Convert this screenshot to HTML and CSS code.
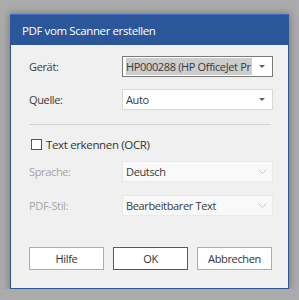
FILE: index.html
```html
<!DOCTYPE html>
<html lang="de">
<head>
<meta charset="utf-8">
<title>PDF vom Scanner erstellen</title>
<link rel="stylesheet" href="styles.css">
</head>
<body>
<div class="dialog">
  <div class="titlebar">PDF vom Scanner erstellen</div>
  <div class="content">
    <div class="row">
      <span class="label">Gerät:</span>
      <div class="select focused"><span class="value"><span class="hl">HP000288 (HP OfficeJet Pr</span></span><span class="tri"></span></div>
    </div>
    <div class="row row-gap">
      <span class="label">Quelle:</span>
      <div class="select"><span class="value">Auto</span><span class="tri"></span></div>
    </div>
    <div class="sep"></div>
    <div class="row check-row">
      <span class="box"></span>
      <span class="check-label">Text erkennen (OCR)</span>
    </div>
    <div class="row row-lang">
      <span class="label disabled">Sprache:</span>
      <div class="select dis"><span class="value">Deutsch</span>
        <svg class="chev" width="9" height="5" viewBox="0 0 9 5"><path d="M0.5 0.5 L4.5 4.5 L8.5 0.5" fill="none" stroke="#c4c4c4" stroke-width="1"/></svg>
      </div>
    </div>
    <div class="row row-style">
      <span class="label disabled">PDF-Stil:</span>
      <div class="select dis"><span class="value">Bearbeitbarer Text</span>
        <svg class="chev" width="9" height="5" viewBox="0 0 9 5"><path d="M0.5 0.5 L4.5 4.5 L8.5 0.5" fill="none" stroke="#c4c4c4" stroke-width="1"/></svg>
      </div>
    </div>
    <div class="buttons">
      <button class="btn">Hilfe</button>
      <button class="btn primary">OK</button>
      <button class="btn">Abbrechen</button>
    </div>
  </div>
</div>
</body>
</html>
```
FILE: styles.css
```css
html, body {
  margin: 0;
  padding: 0;
  background: #ababab;
  font-family: "Open Sans", "Noto Sans", sans-serif;
  font-size: 11px;
  letter-spacing: -0.35px;
  color: #3a3a3a;
}
.dialog {
  width: 279px;
  height: 275px;
  margin: 14px 0 0 10px;
  background: #f0f0f0;
  border: 1px solid #2b579a;
  border-top: none;
  box-sizing: border-box;
  box-shadow: 0 0 7px 1px rgba(0, 0, 0, 0.28);
}
.titlebar {
  height: 31px;
  margin: 0 -1px;
  background: #2b579a;
  border-top: 1px solid #3b6cc0;
  box-sizing: border-box;
  color: #fff;
  font-size: 11.5px;
  letter-spacing: -0.4px;
  padding-left: 12px;
  display: flex;
  align-items: center;
}
.content {
  padding: 11px 15px 0 18px;
}
.row {
  display: flex;
  align-items: center;
  height: 21px;
}
.row-gap { margin-top: 12px; }
.label {
  width: 93px;
  flex: none;
}
.label.disabled { color: #a6a6a6; }
.select {
  flex: 1;
  min-width: 0;
  height: 21px;
  box-sizing: border-box;
  border: 1px solid #d9d9d9;
  background: #fff;
  display: flex;
  align-items: center;
  padding-left: 3px;
}
.select.focused { border-color: #7a7a7a; }
.select.dis {
  background: #f9f9f9;
  border-color: #e9e9e9;
}
.value {
  flex: 1;
  min-width: 0;
  white-space: nowrap;
  overflow: hidden;
}
.hl {
  background: #cdcdcd;
  display: inline-block;
  padding-right: 1px;
  line-height: 17px;
}
.tri {
  flex: none;
  width: 0;
  height: 0;
  border-left: 3px solid transparent;
  border-right: 3px solid transparent;
  border-top: 3px solid #606060;
  margin: 0 7px 0 6px;
}
.chev {
  flex: none;
  margin: 0 5px 0 6px;
}
.sep {
  height: 1px;
  background: #d4d4d4;
  margin: 14px 2px 9px 0;
}
.box {
  width: 11px;
  height: 11px;
  box-sizing: border-box;
  border: 1px solid #555;
  background: #fff;
  margin: 0 4px 0 2px;
}
.check-label { color: #333; font-size: 11.5px; }
.row-lang { margin-top: 6px; }
.row-style { margin-top: 13px; }
.buttons {
  display: flex;
  gap: 9px;
  margin-top: 31px;
}
.btn {
  width: 75px;
  height: 23px;
  box-sizing: border-box;
  border: 1px solid #adadad;
  background: #fff;
  font-family: inherit;
  font-size: 11px;
  letter-spacing: -0.35px;
  color: #333;
  padding: 0;
}
.btn.primary { border-color: #1e64c0; }
```
